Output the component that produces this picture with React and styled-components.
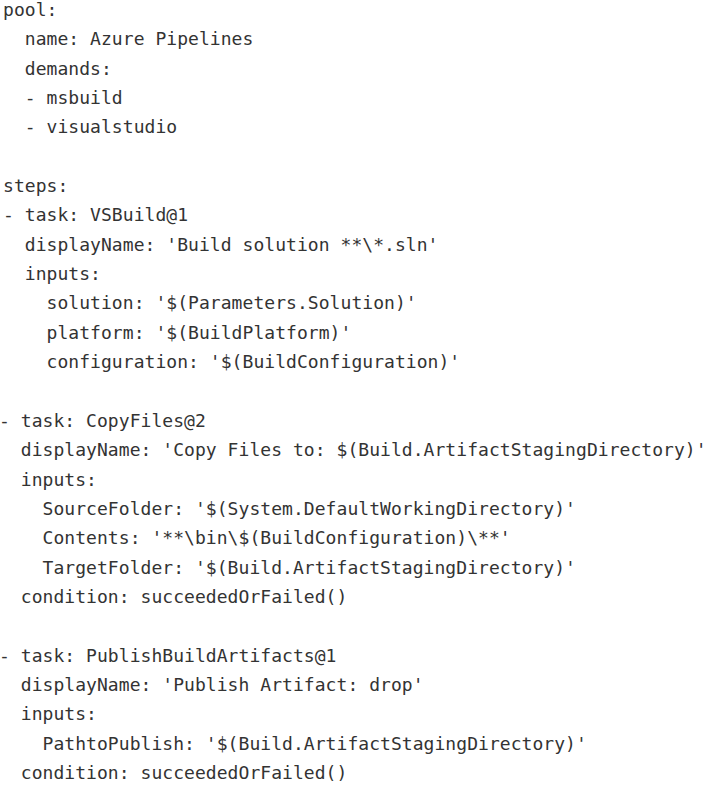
import React from 'react'
import styled, { createGlobalStyle } from 'styled-components'

const GlobalStyle = createGlobalStyle`
  html, body {
    margin: 0;
    padding: 0;
    background: #fff;
  }
`

const Page = styled.div`
  width: 708px;
  height: 785px;
  overflow: hidden;
  background: #fff;
`

const Code = styled.pre`
  margin: -5px 0 0 0;
  padding: 0 0 0 3px;
  font-family: "DejaVu Sans Mono", "Liberation Mono", monospace;
  font-size: 18px;
  letter-spacing: 0.05px;
  line-height: 29.35px;
  color: #333;
`

const Section = styled.div`
  margin-left: ${p => p.$shift || 0}px;
`

const Line = styled.div`
  white-space: pre;
  height: 29.35px;
`

const sections = [
  {
    shift: 0,
    lines: [
      'pool:',
      '  name: Azure Pipelines',
      '  demands:',
      '  - msbuild',
      '  - visualstudio',
      '',
      'steps:',
      '- task: VSBuild@1',
      "  displayName: 'Build solution **\\*.sln'",
      '  inputs:',
      "    solution: '$(Parameters.Solution)'",
      "    platform: '$(BuildPlatform)'",
      "    configuration: '$(BuildConfiguration)'",
      '',
    ],
  },
  {
    shift: -4,
    lines: [
      '- task: CopyFiles@2',
      "  displayName: 'Copy Files to: $(Build.ArtifactStagingDirectory)'",
      '  inputs:',
      "    SourceFolder: '$(System.DefaultWorkingDirectory)'",
      "    Contents: '**\\bin\\$(BuildConfiguration)\\**'",
      "    TargetFolder: '$(Build.ArtifactStagingDirectory)'",
      '  condition: succeededOrFailed()',
      '',
      '- task: PublishBuildArtifacts@1',
      "  displayName: 'Publish Artifact: drop'",
      '  inputs:',
      "    PathtoPublish: '$(Build.ArtifactStagingDirectory)'",
      '  condition: succeededOrFailed()',
    ],
  },
]

const App = () => {
  return (
    <Page>
      <GlobalStyle />
      <Code>
        {sections.map((s, i) => (
          <Section key={i} $shift={s.shift}>
            {s.lines.map((l, j) => (
              <Line key={j}>{l}</Line>
            ))}
          </Section>
        ))}
      </Code>
    </Page>
  )
}

export default App
